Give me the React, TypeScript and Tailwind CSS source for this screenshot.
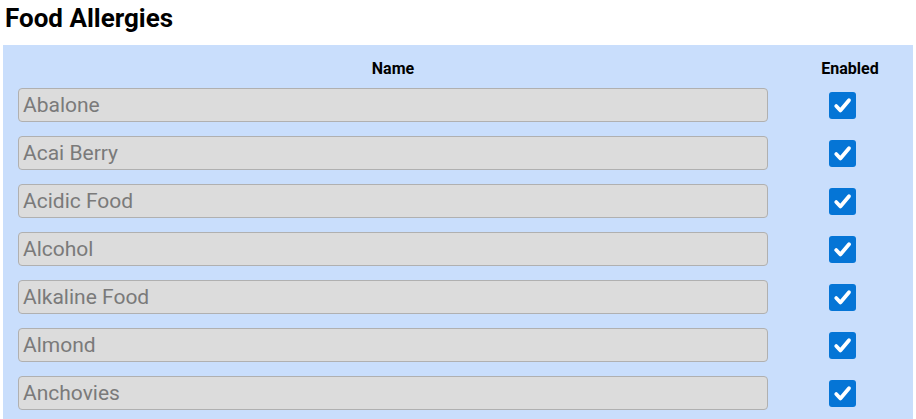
const items = [
  "Abalone",
  "Acai Berry",
  "Acidic Food",
  "Alcohol",
  "Alkaline Food",
  "Almond",
  "Anchovies",
];

const CheckBox = () => (
  <span className="flex h-[27px] w-[27px] items-center justify-center rounded-[3px] bg-[#0575d6]">
    <svg width="21" height="21" viewBox="0 0 20 20" fill="none">
      <path d="M4 10.5l4 4.2L16.2 5" stroke="white" strokeWidth="3.6" strokeLinecap="round" strokeLinejoin="round" />
    </svg>
  </span>
);

const App = () => {
  return (
    <div className="min-h-[419px] bg-white font-['Roboto',sans-serif] text-black">
      <h2 className="pl-[5px] pt-[2px] text-[26px] font-bold leading-[32px] mb-[11px]">Food Allergies</h2>
      <div className="mx-[3px] bg-[#c9defc] pb-[10px]">
        <div className="flex items-center pt-[14px] pb-[9px]">
          <div className="ml-[15px] w-[750px] text-center text-[16px] font-bold leading-[20px]">Name</div>
          <div className="w-[145px] pl-[19px] text-center text-[16px] font-bold leading-[20px]">Enabled</div>
        </div>
        <div className="flex flex-col gap-[14px]">
          {items.map((name) => (
            <div key={name} className="flex items-center">
              <div className="ml-[15px] flex h-[34px] w-[750px] items-center rounded-[4px] border border-[#b0b0b0] bg-[#dcdcdc] pl-[4px] pt-[2px] text-[21px] text-[#7a7a7a]">
                {name}
              </div>
              <div className="flex w-[145px] justify-center pl-[4px]">
                <CheckBox />
              </div>
            </div>
          ))}
        </div>
      </div>
    </div>
  );
};

export default App;
